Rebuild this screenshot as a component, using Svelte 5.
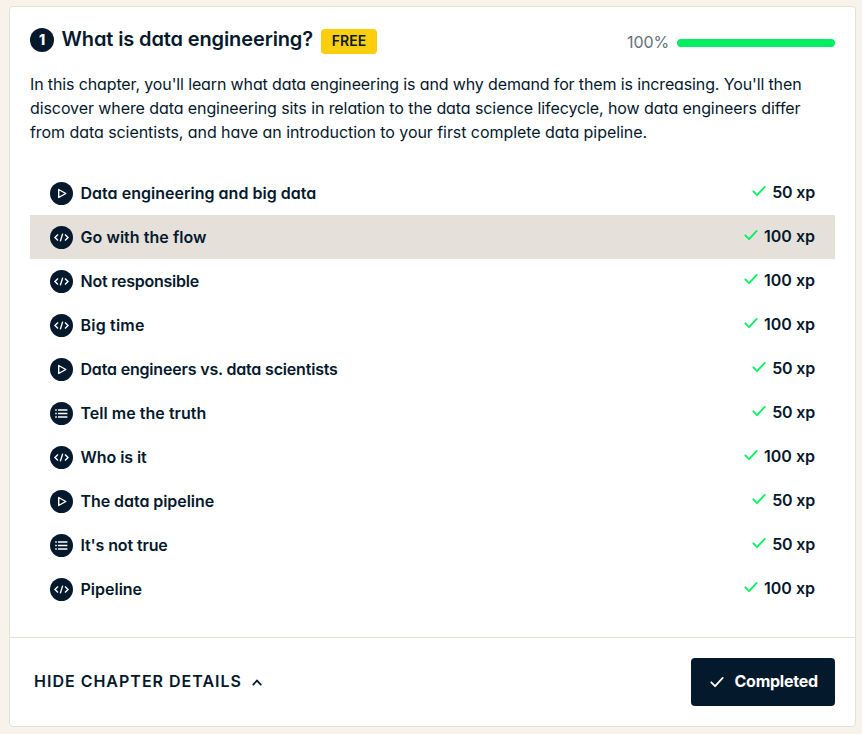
<script>
  const lessons = [
    { kind: 'play', title: 'Data engineering and big data', xp: 50, track: 0.02 },
    { kind: 'code', title: 'Go with the flow', xp: 100, active: true, track: 0.05 },
    { kind: 'code', title: 'Not responsible', xp: 100, track: -0.23 },
    { kind: 'code', title: 'Big time', xp: 100, track: 0.2 },
    { kind: 'play', title: 'Data engineers vs. data scientists', xp: 50, track: -0.18 },
    { kind: 'list', title: 'Tell me the truth', xp: 50, track: 0.03 },
    { kind: 'code', title: 'Who is it', xp: 100, track: -0.06 },
    { kind: 'play', title: 'The data pipeline', xp: 50, track: -0.06 },
    { kind: 'list', title: "It's not true", xp: 50, track: -0.12 },
    { kind: 'code', title: 'Pipeline', xp: 100, track: 0 }
  ];
  const summary = [
    { text: "In this chapter, you'll learn what data engineering is and why demand for them is increasing. You'll then", track: -0.13 },
    { text: 'discover where data engineering sits in relation to the data science lifecycle, how data engineers differ', track: -0.087 },
    { text: 'from data scientists, and have an introduction to your first complete data pipeline.', track: -0.062 }
  ];
</script>

<main>
  <section class="card">
    <div class="content">
      <header>
        <span class="number">1</span>
        <h4>What is data engineering?</h4>
        <span class="free">FREE</span>
        <span class="percent">100%</span>
        <div class="progress"><div style="width: 100%"></div></div>
      </header>
      <p>
        {#each summary as line}
          <span style="letter-spacing: {line.track}px">{line.text}</span>
        {/each}
      </p>
      <ul>
        {#each lessons as lesson}
          <li class:active={lesson.active}>
            <svg class="kind" viewBox="0 0 23 23">
              <circle cx="11.5" cy="11.5" r="11.5" fill="#05192d" />
              <g fill="none" stroke="#fff" stroke-width="1.4">
                {#if lesson.kind === 'play'}
                  <path d="M8.7 7.5v8l7.1-4z" stroke-linejoin="round" />
                {:else if lesson.kind === 'code'}
                  <path d="M8 8.6L5 11.5l3 2.9M15 8.6l3 2.9-3 2.9M12.7 7.6l-2.4 7.8" stroke-width="1.4" />
                {:else}
                  <path d="M5.2 8h1.6M8 8h9.4M5.2 11.5h1.6M8 11.5h9.4M5.2 15h1.6M8 15h9.4" />
                {/if}
              </g>
            </svg>
            <span class="title" style="letter-spacing: {lesson.track}px">{lesson.title}</span>
            <svg class="check" viewBox="0 0 14 12">
              <path d="M1.3 6.3l3.8 3.9 7.6-8.3" fill="none" stroke="#03ef62" stroke-width="1.8" stroke-linecap="round" stroke-linejoin="round" />
            </svg>
            <span class="xp" class:short={lesson.xp < 100}>{lesson.xp} xp</span>
          </li>
        {/each}
      </ul>
    </div>
    <footer>
      <button class="toggle">
        <span>HIDE CHAPTER DETAILS</span>
        <svg width="10" height="7" viewBox="0 0 10 7">
          <path d="M1.2 5.6L5 1.6l3.8 4" fill="none" stroke="#05192d" stroke-width="1.7" stroke-linecap="round" />
        </svg>
      </button>
      <button class="done">
        <svg width="14" height="12" viewBox="0 0 14 12">
          <path d="M1.3 6.3l3.8 3.9 7.6-8.3" fill="none" stroke="#fff" stroke-width="1.8" stroke-linecap="round" stroke-linejoin="round" />
        </svg>
        <span>Completed</span>
      </button>
    </footer>
  </section>
</main>

<style>
  :global(body) { background: #f7f3eb; }
  main {
    box-sizing: border-box;
    height: 734px;
    padding: 6px 6px 7px 9px;
    font-family: Inter, "Liberation Sans", sans-serif;
    font-feature-settings: "cv11";
    color: #05192d;
  }
  .card {
    box-sizing: border-box;
    height: 721px;
    display: flex;
    flex-direction: column;
    background: #fff;
    border: 1px solid #e5e1da;
    border-radius: 4px;
  }
  .content { height: 630px; padding: 0 20px; }
  header { display: flex; align-items: center; height: 65px; }
  .number {
    width: 24px;
    height: 24px;
    border-radius: 50%;
    background: #05192d;
    color: #fff;
    font: 800 14px/24px Inter, sans-serif;
    text-align: center;
  }
  h4 { margin: 0 0 2px 7.5px; width: 251.5px; font-size: 20px; font-weight: 600; line-height: 24px; letter-spacing: -0.12px; white-space: nowrap; }
  .free {
    width: 56px;
    height: 25px;
    margin: 4px 0 0 8px;
    border-radius: 4px;
    background: #fcce0d;
    font-size: 14px;
    font-weight: 600;
    line-height: 24px;
    letter-spacing: 0.1px;
    text-align: center;
  }
  .percent { margin: 4px 8px 0 auto; font-size: 16px; letter-spacing: -0.1px; color: #65707c; }
  .progress { width: 158px; height: 8px; margin-top: 7px; border-radius: 4px; background: #e5e1da; overflow: hidden; }
  .progress div { height: 100%; background: #03ef62; }
  p { margin: 0; height: 99px; font-size: 16px; line-height: 24px; }
  p span { display: block; white-space: nowrap; }
  ul { list-style: none; margin: 0; padding: 0; }
  li { display: flex; align-items: center; box-sizing: border-box; height: 44px; padding: 0 20px; font-size: 16px; font-weight: 600; line-height: 24px; }
  .active { background: #e5e1da; }
  .kind { width: 23px; height: 23px; margin: 1px 7.5px 0 0; }
  .title { white-space: nowrap; }
  .check { width: 14px; height: 12px; margin: 0 6px 4px auto; }
  .xp { margin-bottom: 2px; }
  .short { letter-spacing: -0.18px; }
  footer { flex: 1; display: flex; align-items: center; justify-content: space-between; padding: 0 20px 0 24px; border-top: 1px solid #e5e1da; }
  button { display: flex; align-items: center; padding: 0; border: 0; background: none; font: inherit; font-feature-settings: "cv11"; color: #05192d; font-weight: 600; font-size: 16px; white-space: nowrap; }
  button span { margin-bottom: 2px; }
  .toggle span { width: 208px; letter-spacing: 1px; }
  .toggle svg { margin-left: 9.5px; }
  .done { width: 144px; height: 48px; border-radius: 4px; background: #05192d; color: #fff; font-weight: 700; letter-spacing: -0.25px; }
  .done svg { margin: 0 10.5px 0 19px; }
</style>
